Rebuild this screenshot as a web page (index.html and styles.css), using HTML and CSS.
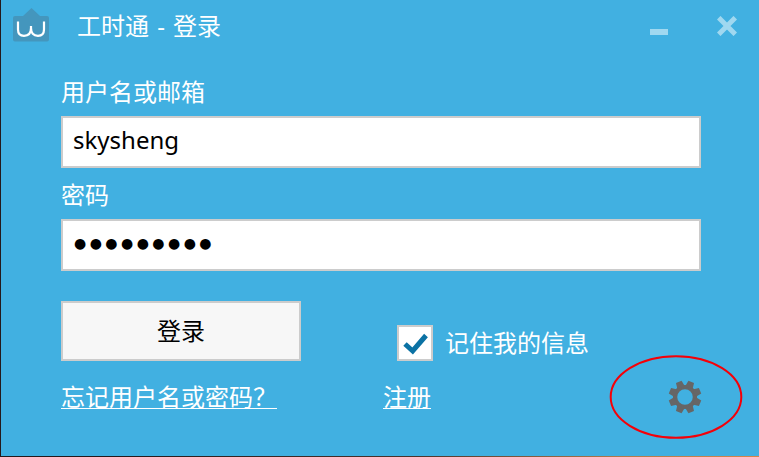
FILE: index.html
```html
<!DOCTYPE html>
<html lang="zh-CN">
<head>
<meta charset="utf-8">
<title>工时通 - 登录</title>
<link rel="stylesheet" href="styles.css">
</head>
<body>
<main class="window">
  <header class="titlebar">
    <svg class="logo" width="36" height="34" viewBox="0 0 36 34">
      <path fill="#4496bd" d="M2 8H10L18.500 0L27 8H34Q36 8 36 10V31.500Q36 33.500 34 33.500H2Q0 33.500 0 31.500V10Q0 8 2 8Z"/>
      <path fill="none" stroke="#fff" stroke-width="2.200" d="M5 13.500V21.500Q5 27.800 11 27.800Q18 27.800 18 20V18V20Q18 27.800 25 27.800Q31 27.800 31 21.500V13.500"/>
    </svg>
    <h1 class="title">工时通<span class="dash">-</span>登录</h1>
    <svg class="minimize" width="18" height="6"><path fill="#a0d8f0" d="M0 0H18V6H0Z"/></svg>
    <svg class="close" width="20" height="20"><path stroke="#a0d8f0" stroke-width="5" d="M1.700 1.700L18.300 18.300M18.300 1.700L1.700 18.300"/></svg>
  </header>
  <form class="form">
    <div class="label">用户名或邮箱</div>
    <div class="field">skysheng</div>
    <div class="label">密码</div>
    <div class="field"><span class="dots">●●●●●●●●●</span></div>
    <div class="actions">
      <button class="login" type="button">登录</button>
      <div class="remember">
        <span class="checkbox"><svg width="32" height="32" viewBox="0 0 32 32"><path fill="none" stroke="#0b72a4" stroke-width="5" d="M6 17L13.700 24L27 8.500"/></svg></span>
        <span>记住我的信息</span>
      </div>
    </div>
    <div class="links">
      <a class="link forgot">忘记用户名或密码？</a>
      <a class="link">注册</a>
      <svg class="gear" width="34" height="34" viewBox="-17.500 -17.500 35 35">
        <defs><path id="tooth" d="M-4.200 -10L-3.100 -16.800H3.100L4.200 -10Z"/></defs>
        <circle r="10.200" fill="none" stroke="#666" stroke-width="4.400"/>
        <g fill="#666">
          <use href="#tooth" transform="rotate(22.500)"/><use href="#tooth" transform="rotate(67.500)"/>
          <use href="#tooth" transform="rotate(112.500)"/><use href="#tooth" transform="rotate(157.500)"/>
          <use href="#tooth" transform="rotate(202.500)"/><use href="#tooth" transform="rotate(247.500)"/>
          <use href="#tooth" transform="rotate(292.500)"/><use href="#tooth" transform="rotate(337.500)"/>
        </g>
      </svg>
    </div>
  </form>
  <svg class="highlight" width="134" height="84"><ellipse cx="67" cy="42" rx="65.300" ry="40.700" fill="none" stroke="#f50008" stroke-width="2"/></svg>
</main>
</body>
</html>
```
FILE: styles.css
```css
* { box-sizing: border-box; }
body {
  margin: 0;
  font: 24px/32px "Noto Sans", "Noto Sans CJK SC", sans-serif;
  color: #fff;
}
.window {
  position: relative;
  width: 759px;
  height: 457px;
  overflow: hidden;
  background: #41b0e1;
  border-left: 1px solid #292c30;
  border-bottom: 1px solid;
  border-image: linear-gradient(90deg, #24191b 15%, #4b342d 55%, #b47a4b 82%, #d9854a) 1;
  border-top: 0;
  border-right: 0;
}
.titlebar {
  display: flex;
  height: 76px;
  padding: 8px 22px 0 12px;
}
.logo { flex: none; }
.title {
  flex: 1;
  height: 32px;
  margin: 2px 0 0 28px;
  font: inherit;
}
.dash {
  display: inline-block;
  width: 24px;
  text-align: center;
}
.minimize { margin: 21px 49px 0 0; }
.close { margin-top: 8px; }
.form { padding: 0 58px 0 60px; }
.label { height: 32px; }
.field {
  height: 52px;
  margin: 8px 0 11px;
  padding: 6px 10px;
  background: #fff;
  border: 2px solid #ccc;
  color: #000;
}
.dots {
  display: block;
  padding-left: 1px;
  font: 14px/32px "DejaVu Sans", sans-serif;
  letter-spacing: 3.450px;
}
.actions {
  display: flex;
  align-items: flex-end;
  height: 60px;
  margin-top: 30px;
}
.login {
  width: 240px;
  height: 60px;
  padding: 0;
  border: 2px solid #ccc;
  background: #f7f7f7;
  color: #000;
  font: inherit;
}
.remember {
  display: flex;
  gap: 12px;
  align-items: center;
  margin-left: 96px;
}
.checkbox {
  display: flex;
  width: 36px;
  height: 36px;
  border: 2px solid #ccc;
  background: #fff;
}
.links {
  display: flex;
  margin-top: 20px;
}
.link {
  text-decoration: underline;
  text-decoration-thickness: 1px;
  text-underline-offset: 2px;
}
.forgot {
  width: 216px;
  margin-right: 106px;
}
.gear { margin: -1px -1px 0 auto; }
.highlight {
  position: absolute;
  left: 608px;
  top: 355px;
}
```
